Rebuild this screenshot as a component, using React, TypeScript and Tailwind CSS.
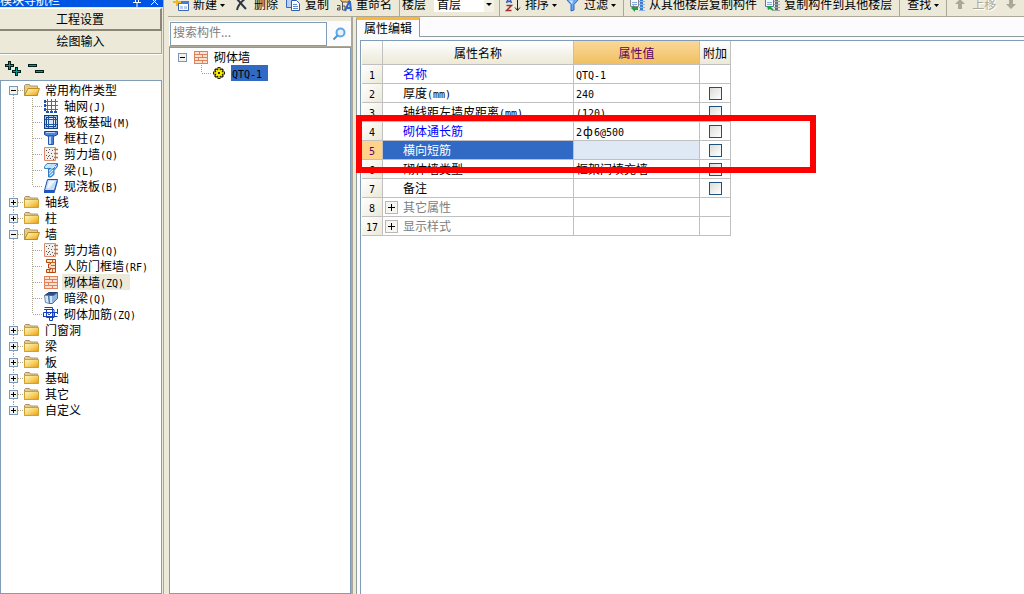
import type { ReactNode } from 'react';
import clsx from 'clsx';

type IconName =
    | 'grid'
    | 'raft'
    | 'column'
    | 'shearWall'
    | 'beam'
    | 'slab'
    | 'doorFrame'
    | 'brick'
    | 'hiddenBeam'
    | 'wallRebar';

interface TreeItem {
    label: string;
    icon: IconName;
    selected?: boolean;
}

interface TreeGroup {
    label: string;
    open?: boolean;
    items?: TreeItem[];
}

interface PropertyRow {
    no: number;
    name: string;
    value?: string;
    extra?: boolean;
    tone?: 'key' | 'muted';
    active?: boolean;
}

const groups: TreeGroup[] = [
    {
        label: '常用构件类型',
        open: true,
        items: [
            { label: '轴网(J)', icon: 'grid' },
            { label: '筏板基础(M)', icon: 'raft' },
            { label: '框柱(Z)', icon: 'column' },
            { label: '剪力墙(Q)', icon: 'shearWall' },
            { label: '梁(L)', icon: 'beam' },
            { label: '现浇板(B)', icon: 'slab' },
        ],
    },
    { label: '轴线' },
    { label: '柱' },
    {
        label: '墙',
        open: true,
        items: [
            { label: '剪力墙(Q)', icon: 'shearWall' },
            { label: '人防门框墙(RF)', icon: 'doorFrame' },
            { label: '砌体墙(ZQ)', icon: 'brick', selected: true },
            { label: '暗梁(Q)', icon: 'hiddenBeam' },
            { label: '砌体加筋(ZQ)', icon: 'wallRebar' },
        ],
    },
    { label: '门窗洞' },
    { label: '梁' },
    { label: '板' },
    { label: '基础' },
    { label: '其它' },
    { label: '自定义' },
];

const properties: PropertyRow[] = [
    { no: 1, name: '名称', value: 'QTQ-1', tone: 'key' },
    { no: 2, name: '厚度(mm)', value: '240', extra: true },
    { no: 3, name: '轴线距左墙皮距离(mm)', value: '(120)', extra: true },
    { no: 4, name: '砌体通长筋', value: '2ф6@500', extra: true, tone: 'key' },
    { no: 5, name: '横向短筋', extra: true, active: true },
    { no: 6, name: '砌体墙类型', value: '框架间填充墙', extra: true },
    { no: 7, name: '备注', extra: true },
    { no: 8, name: '其它属性', tone: 'muted' },
    { no: 17, name: '显示样式', tone: 'muted' },
];

// Latin runs are set in a narrower mono face so they take half a Han character each.
function Mixed({ text }: { text: string }) {
    return (
        <>
            {text.split(/([\x20-\x7e]+|ф)/).map((part, i) => {
                if (i % 2 === 0) return part;
                if (part === 'ф') {
                    return (
                        <span key={i} className="inline-block w-3 text-center leading-none">
                            {part}
                        </span>
                    );
                }
                return (
                    <span key={i} className="font-['DejaVu_Sans_Mono',monospace] text-[10px] leading-none">
                        {part}
                    </span>
                );
            })}
        </>
    );
}

function Svg({ w = 16, children }: { w?: number; children: ReactNode }) {
    return (
        <svg width={w} height="16" viewBox={`0 0 ${w} 16`} className="block shrink-0" fill="none" aria-hidden="true">
            {children}
        </svg>
    );
}

function ItemIcon({ name }: { name: IconName }) {
    switch (name) {
        case 'grid':
            return (
                <Svg>
                    <path d="M4.500 1v13M8.500 1v13M12.500 1v13M1 3.500h14M1 7.500h14M1 11.500h14" stroke="#3f6cc8" />
                    <path
                        d="M1 2h2v3H1zM1 6h2v3H1zM1 10h2v3H1zM3 13h3v2H3zM7 13h3v2H7zM11 13h3v2h-3z"
                        fill="#2350a8"
                    />
                </Svg>
            );
        case 'raft':
            return (
                <Svg>
                    <path d="M1 1h14v14H1z" fill="#123f86" />
                    <path d="M2.500 2.500h11v11h-11z" stroke="#a8c8ee" />
                    <path d="M4 4h8v8H4z" fill="#e8f0fb" />
                    <path d="M5.500 2v12M10.500 2v12M2 5.500h12M2 10.500h12" stroke="#1e56a8" />
                    <path d="M6 6h4v4H6z" fill="#d8e6f8" />
                </Svg>
            );
        case 'column':
            return (
                <Svg>
                    <path d="M1.500 1.500h13v3l-3 1.500h-7l-3-1.500z" fill="#4d86e0" stroke="#173f9a" />
                    <path d="M3 2.500h9" stroke="#b8d4fa" />
                    <path d="M5.500 6h5v8.500h-5z" fill="#c4dcfc" stroke="#2355b4" />
                    <path d="M8 6h2v8H8z" fill="#4a80d8" />
                </Svg>
            );
        case 'shearWall':
            return (
                <Svg>
                    <path d="M1.500 1.500h11v13h-11z" fill="#f1eeec" stroke="#e08a68" />
                    <path
                        d="M3 4h1v1H3zM6 3h1v1H6zM5 6h1v1H5zM8 7h1v1H8zM3 9h1v1H3zM6 9h1v1H6zM9 10h1v1H9zM4 12h1v1H4zM7 12h1v1H7zM10 13h1v1h-1zM5 10h1v1H5zM9 4h1v1H9z"
                        fill="#555"
                    />
                    <path d="M11 3.500h4M11 7.500h4M11 11.500h4" stroke="#d8691e" strokeWidth="1.500" />
                </Svg>
            );
        case 'beam':
            return (
                <Svg>
                    <path d="M1.500 4.500 4 1.500h10.500l-3 3v2h-10z" fill="#bfe0f8" stroke="#3a84c8" />
                    <path d="M14.500 1.500v3l-3.500 4v4l-3 2.500H5.500v-8h6" fill="#6fb0e8" stroke="#2f78be" />
                    <path d="m6 12 4-4M6 9l6-5M3 6l4-4M7 14l3-3" stroke="#e3f3fd" />
                </Svg>
            );
        case 'slab':
            return (
                <Svg>
                    <path d="M4.500 1.500h10l-3 11h-10z" fill="#c6ddfa" stroke="#1c4fb0" />
                    <path d="M1 12.500h10.500l3-11v3l-3 10.500H1z" fill="#1f58bd" />
                    <path d="M6 3h6L6 10H4z" fill="#eef6ff" />
                </Svg>
            );
        case 'doorFrame':
            return (
                <Svg>
                    <path
                        d="M3.500 1.500h9v13h-9v-3h4v-1.500h-2v-4h2V4.500h-4z"
                        fill="#fbe0c8"
                        stroke="#b3480f"
                    />
                    <path d="M8 4.500h4M8 7.500h4M8 10.500h4M6.500 12v2M9.500 11v3M9.500 2v2" stroke="#c86428" />
                </Svg>
            );
        case 'brick':
            return (
                <Svg>
                    <path d="M1 2h14v13H1z" fill="#e2805a" />
                    <path
                        d="M2 3h4v2H2zM7 3h7v2H7zM2 6h7v2H2zM10 6h4v2h-4zM2 9h3v2H2zM6 9h8v2H6zM2 12h7v2H2zM10 12h4v2h-4z"
                        fill="#fbe3d4"
                    />
                </Svg>
            );
        case 'hiddenBeam':
            return (
                <Svg>
                    <path d="M1.500 5.500 6 2.500h8.500l-4 3z" fill="#2d4f88" stroke="#1e3d78" />
                    <path d="M1.500 5.500h4l1 8-4-1z" fill="#dbe9f8" stroke="#5f88b8" />
                    <path d="M5.500 5.500h5l4-3v6l-5 5h-3z" fill="#8fb3dc" stroke="#3f6cab" />
                    <path d="M7 6h2v7H7z" fill="#d4e5f8" />
                </Svg>
            );
        case 'wallRebar':
            return (
                <Svg>
                    <path d="M1.500 1.500h8v13h-3v-4h-6v-4h14M14.500 3v5M11.500 6.500v4h3M0 10.500h12" stroke="#1740c0" />
                    <path d="M1 3.500h10v8H3.500v-8M4 6l2 3 3-3" stroke="#1740c0" />
                </Svg>
            );
    }
}

function Folder({ open }: { open?: boolean }) {
    return (
        <Svg>
            <defs>
                <linearGradient id="folderFill" x1="0" y1="0" x2="1" y2="1">
                    <stop offset="0" stopColor="#fff6c0" />
                    <stop offset="0.5" stopColor="#f8d468" />
                    <stop offset="1" stopColor="#e89a10" />
                </linearGradient>
            </defs>
            <path d="M.5 13.500v-10l1-1h4l1 1.500h7v9.500z" fill="#e4cc90" stroke="#a89868" />
            {open ? (
                <path d="M.5 13.500 4 6.500h11.500l-2.500 7z" fill="url(#folderFill)" stroke="#c08c20" />
            ) : (
                <path d="M.5 5.500h14v8H.5z" fill="url(#folderFill)" stroke="#d0a030" />
            )}
        </Svg>
    );
}

function ExpandBox({ x, open }: { x: number; open?: boolean }) {
    return (
        <g shapeRendering="crispEdges">
            <rect x={x - 4 + 0.5} y="4.5" width="8" height="8" fill="#f4f2ec" stroke="#7b98b5" />
            <path d={`M${x - 2} 8.5h5`} stroke="#000" />
            {!open && <path d={`M${x + 0.5} 6v5`} stroke="#000" />}
        </g>
    );
}

function GroupLines({ open, first, last }: { open?: boolean; first?: boolean; last?: boolean }) {
    return (
        <Svg w={23}>
            {!first && <path d="M12.500 0v4" stroke="#a8a490" strokeDasharray="1 1" />}
            {!last && <path d="M12.500 13v3" stroke="#a8a490" strokeDasharray="1 1" />}
            <path d="M17 8.500h6" stroke="#a8a490" strokeDasharray="1 1" />
            <ExpandBox x={12} open={open} />
        </Svg>
    );
}

function ItemLines({ last }: { last?: boolean }) {
    return (
        <Svg w={42}>
            <path
                d={`M12.500 0v16M31.500 0v${last ? 8 : 16}M32 8.500h10`}
                stroke="#a8a490"
                strokeDasharray="1 1"
            />
        </Svg>
    );
}

function ComponentTree() {
    return (
        <ul className="flex-1 border border-[#7f9db9] bg-white pt-px">
            {groups.map((group, g) => (
                <li key={group.label}>
                    <button type="button" className="flex h-4 items-center whitespace-nowrap">
                        <GroupLines open={group.open} first={g === 0} last={g === groups.length - 1} />
                        <Folder open={group.open} />
                        <span className="ml-[3px] px-0.5">{group.label}</span>
                    </button>
                    {group.items && (
                        <ul>
                            {group.items.map((item, i) => (
                                <li key={item.label}>
                                    <button type="button" className="flex h-4 items-center whitespace-nowrap">
                                        <ItemLines last={i === group.items!.length - 1} />
                                        <ItemIcon name={item.icon} />
                                        <span
                                            className={clsx(
                                                'ml-[3px] h-4 px-0.5 leading-4',
                                                item.selected && 'bg-[#ece9d8] pr-1.5',
                                            )}
                                        >
                                            <Mixed text={item.label} />
                                        </span>
                                    </button>
                                </li>
                            ))}
                        </ul>
                    )}
                </li>
            ))}
        </ul>
    );
}

function Sidebar() {
    return (
        <aside className="flex w-[164px] shrink-0 flex-col border-r border-[#aca899] pr-px">
            <div className="-mr-px flex h-2 items-end justify-between overflow-hidden border-b border-[#ece9d8] bg-[#0054e3] text-white">
                <h2 className="leading-[14px]">模块导航栏</h2>
                <div className="flex gap-0.5">
                    <button type="button" aria-label="固定">
                        <Svg>
                            <path d="M4 11.500h8M8 11v5M6.500 6v5M9.500 6v5" stroke="#fff" />
                        </Svg>
                    </button>
                    <button type="button" aria-label="关闭">
                        <Svg>
                            <path d="m4 7 7 7M11 7l-7 7" stroke="#fff" />
                        </Svg>
                    </button>
                </div>
            </div>
            <button
                type="button"
                className="h-[23px] border-t border-r-2 border-b-2 border-t-white border-r-[#8a8778] border-b-[#8a8778]"
            >
                工程设置
            </button>
            <button
                type="button"
                className="h-[23px] border-r border-b border-r-[#aca899] border-b-[#aca899] pb-0.5"
            >
                绘图输入
            </button>
            <div className="flex h-[26px] items-center gap-1 border-t border-white pl-1">
                <button type="button" aria-label="全部展开">
                    <Svg w={18}>
                        <path d="M1 4h3V1h3v3h3v3H7v3H4V7H1zM8 10h3V7h3v3h3v3h-3v3h-3v-3H8z" fill="#002020" />
                        <path d="M2 5.500h7M5.500 2v7M9 11.500h7M12.500 8v7" stroke="#00a090" />
                    </Svg>
                </button>
                <button type="button" aria-label="全部折叠">
                    <Svg w={18}>
                        <path d="M2 4h9v3H2zM9 10h9v3H9z" fill="#002020" />
                        <path d="M3 5.500h7M10 11.500h7" stroke="#00a090" />
                    </Svg>
                </button>
            </div>
            <ComponentTree />
        </aside>
    );
}

interface ToolButtonProps {
    icon?: ReactNode;
    label: string;
    menu?: boolean;
    disabled?: boolean;
}

function ToolButton({ icon, label, menu, disabled }: ToolButtonProps) {
    return (
        <button
            type="button"
            disabled={disabled}
            className={clsx(
                'ml-[7px] flex shrink-0 items-center gap-1 whitespace-nowrap',
                !icon && 'pl-0.5',
                disabled && 'text-[#aca899] [text-shadow:1px_1px_#fff]',
            )}
        >
            {icon}
            <span>{label}</span>
            {menu && (
                <svg width="5" height="16" viewBox="0 0 5 16" className="-ml-px" aria-hidden="true">
                    <path d="M0 8h5L2.500 11z" fill="#000" />
                </svg>
            )}
        </button>
    );
}

function Separator() {
    return <span className="-mr-0.5 ml-[7px] h-6 w-px shrink-0 bg-[#aca899]" />;
}

function CopyFloorIcon({ flip }: { flip?: boolean }) {
    return (
        <Svg>
            <path d="M1.500 1.500h8v9h-8z" fill="#f4f8ff" stroke={flip ? '#4b78c0' : '#808890'} />
            <path d="M3 6.500h5M3 8.500h5" stroke="#8aa8d8" />
            <path d="M12.500 0v15" stroke={flip ? '#607080' : '#3d7cd0'} strokeWidth="3" />
            <path d="M10 2.500h6M10 5.500h6M10 8.500h6M10 11.500h6M10 14.500h6" stroke={flip ? '#9aa4b0' : '#88b4ee'} />
            <path d={flip ? 'M3 10h5l-1 1 3 3-1 1-3-2-2 1z' : 'M2 12l3-3v2h4v3H6v2z'} fill="#22a040" />
        </Svg>
    );
}

function Toolbar() {
    return (
        <div className="flex h-[17px] items-end overflow-hidden border-b border-[#aca899] bg-[#ece9d8]">
            <div className="flex h-6 items-center">
                <div className="-ml-0.5 flex">
                    <ToolButton
                        label="新建"
                        menu
                        icon={
                            <Svg>
                                <path d="M5.500 5.500h10v9h-10z" fill="#fff" stroke="#3c64b4" />
                                <path d="M5 5h11v3H5z" fill="#4a7ad0" />
                                <path d="M7 10h3v3H7zM11 10h3v3h-3z" fill="#b8cdf0" />
                                <path d="M4 0v10M0 6h8" stroke="#f0b818" strokeWidth="2" />
                            </Svg>
                        }
                    />
                </div>
                <div className="ml-0.5 flex">
                    <ToolButton
                        label="删除"
                        icon={
                            <Svg>
                                <path d="M2 2c3 3 7 8 10 11M12 2C8 5 4 9 3 14" stroke="#303848" strokeWidth="2" />
                            </Svg>
                        }
                    />
                </div>
                <ToolButton
                    label="复制"
                    icon={
                        <Svg>
                            <path d="M1.500 1.500h6l3 3v7h-9z" fill="#b8d0f4" stroke="#3a68b8" />
                            <path d="M6.500 4.500h5l3 3v7h-8z" fill="#fff" stroke="#2f5cb0" />
                            <path d="M8 8.500h4M8 10.500h5M8 12.500h5" stroke="#5c88d0" />
                        </Svg>
                    }
                />
                <ToolButton
                    label="重命名"
                    icon={
                        <Svg>
                            <path d="M3 2h9l2 4H6z" fill="#f0c880" stroke="#6b5020" />
                            <path d="M1 9.500h3v4.500H1.500V12H4M6.500 6v8H9v-4H6.500" stroke="#505050" />
                            <path d="m9 15 4-9h1l1 9M10.500 12h4" stroke="#2f68c8" strokeWidth="2" />
                        </Svg>
                    }
                />
                <Separator />
                <label htmlFor="floor" className="ml-1 shrink-0 whitespace-nowrap">
                    楼层
                </label>
                <div className="relative -mr-0.5 ml-2 shrink-0">
                    <select
                        id="floor"
                        className="block h-4 w-[60px] appearance-none bg-white pl-[3px] leading-4 outline-none"
                    >
                        <option>首层</option>
                    </select>
                    <svg
                        className="pointer-events-none absolute top-0 right-0 bg-[#f4f2e8]"
                        width="10"
                        height="16"
                        aria-hidden="true"
                    >
                        <path d="M2 7h6l-3 3z" fill="#000" />
                    </svg>
                </div>
                <Separator />
                <ToolButton
                    label="排序"
                    menu
                    icon={
                        <Svg>
                            <path d="m1.500 7 2.500-6 2.500 6M2 5.500h4" stroke="#2c60c0" strokeWidth="1.500" />
                            <path d="M1.500 9.500h5l-5 5h5" stroke="#a03030" strokeWidth="1.500" />
                            <path d="M12.500 0v14M10 11.500l2.500 3 2.500-3" stroke="#202020" />
                        </Svg>
                    }
                />
                <ToolButton
                    label="过滤"
                    menu
                    icon={
                        <Svg>
                            <path d="M2.500 3.500h12l-4.500 5V14l-3 1V8.500z" fill="#6ca8f4" stroke="#2c64c8" />
                            <path d="M5 4.500h4L8 8z" fill="#d4e8ff" />
                        </Svg>
                    }
                />
                <Separator />
                <ToolButton label="从其他楼层复制构件" icon={<CopyFloorIcon />} />
                <ToolButton label="复制构件到其他楼层" icon={<CopyFloorIcon flip />} />
                <Separator />
                <ToolButton label="查找" menu />
                <Separator />
                <ToolButton
                    label="上移"
                    disabled
                    icon={
                        <Svg>
                            <path d="M8 3l5 5h-3v5H6V8H3z" fill="#aca899" />
                        </Svg>
                    }
                />
                <ToolButton
                    label="下移"
                    disabled
                    icon={
                        <Svg>
                            <path d="M8 13l5-5h-3V3H6v5H3z" fill="#aca899" />
                        </Svg>
                    }
                />
            </div>
        </div>
    );
}

function ComponentList() {
    return (
        <section className="flex w-[188px] shrink-0 flex-col border-r-[3px] border-[#ece9d8] pl-px">
            <div className="flex flex-1 flex-col border-r-2 border-[#aca899] bg-[#ece9d8] pt-1">
                <div className="flex h-[26px] items-stretch border-b border-[#aca899] bg-[#fcfcfe] pt-px pl-px">
                    <input
                        type="text"
                        aria-label="搜索构件"
                        placeholder="搜索构件..."
                        className="w-[157px] border border-[#7f9db9] bg-white px-0.5 pb-1 outline-none placeholder:text-[#808080]"
                    />
                    <button type="button" aria-label="搜索" className="flex flex-1 items-center justify-center">
                        <Svg>
                            <circle cx="9.5" cy="6.5" r="4" fill="#e4f2fe" stroke="#5ca8e4" strokeWidth="2" />
                            <path d="m6.500 9.500-4 4" stroke="#4a94d8" strokeWidth="2" />
                        </Svg>
                    </button>
                </div>
                <ul className="flex-1 border border-[#7f9db9] bg-white pt-px">
                    <li className="flex h-4 items-center">
                        <Svg w={23}>
                            <ExpandBox x={12} open />
                        </Svg>
                        <ItemIcon name="brick" />
                        <span className="ml-[5px]">砌体墙</span>
                    </li>
                    <li className="flex h-4 items-center">
                        <Svg w={42}>
                            <path d="M31.500 0v8M32 8.500h10" stroke="#a8a490" strokeDasharray="1 1" />
                        </Svg>
                        <Svg>
                            <path
                                d="M7 2v12M1 8h12M3 4l8 8M11 4l-8 8"
                                stroke="#202000"
                                strokeWidth="3"
                            />
                            <circle cx="7" cy="8" r="4.5" fill="#202000" />
                            <path d="M7 3v10M2 8h10M4 5l6 6M10 5l-6 6" stroke="#ffee00" strokeWidth="1.500" />
                            <circle cx="7" cy="8" r="3" fill="#ffee00" />
                            <path d="M6 7h2v2H6z" fill="#303000" />
                        </Svg>
                        <span className="ml-[3px] h-4 bg-[#316ac5] pr-1.5 pl-px leading-4 text-black">
                            <Mixed text="QTQ-1" />
                        </span>
                    </li>
                </ul>
            </div>
        </section>
    );
}

const headCell =
    'border-r border-b border-[#c0c0c0] bg-linear-to-b from-white to-[#ece9d8] p-0 text-center font-normal whitespace-nowrap';
const bodyCell = 'h-[19px] border-r border-b border-[#c0c0c0] p-0 leading-4 whitespace-nowrap';

function PropertyTable() {
    return (
        <table className="w-[369px] table-fixed border-separate border-spacing-0">
            <colgroup>
                <col className="w-[21px]" />
                <col className="w-[191px]" />
                <col className="w-[126px]" />
                <col className="w-[31px]" />
            </colgroup>
            <thead>
                <tr className="h-6">
                    <th className={headCell} aria-label="序号" />
                    <th className={headCell}>属性名称</th>
                    <th className="border-r border-b border-[#c0c0c0] bg-linear-to-b from-[#fbd898] to-[#f0c060] p-0 text-center font-normal text-[#600060]">
                        属性值
                    </th>
                    <th className={headCell}>附加</th>
                </tr>
            </thead>
            <tbody>
                {properties.map((row) => (
                    <tr key={row.no}>
                        <td
                            className={clsx(
                                bodyCell,
                                'text-center',
                                row.active
                                    ? 'bg-[#ffd38a] text-[#600060]'
                                    : 'bg-linear-to-br from-white to-[#ece9d8]',
                            )}
                        >
                            <Mixed text={String(row.no)} />
                        </td>
                        <td className={clsx(bodyCell, row.active && 'bg-[#316ac5] text-white')}>
                            <div className="flex h-4 items-center">
                                <span className="flex w-5 shrink-0 pl-0.5">
                                    {row.tone === 'muted' && (
                                        <button
                                            type="button"
                                            aria-label={`展开${row.name}`}
                                            className="flex h-[13px] w-[13px] items-center justify-center border border-[#b8b8b8] bg-[#f6f5f0]"
                                        >
                                            <svg width="7" height="7" aria-hidden="true">
                                                <path d="M0 3.500h7M3.500 0v7" stroke="#000" />
                                            </svg>
                                        </button>
                                    )}
                                </span>
                                <span
                                    className={clsx(
                                        row.tone === 'key' && 'text-[#0000ff]',
                                        row.tone === 'muted' && 'text-[#808080]',
                                    )}
                                >
                                    <Mixed text={row.name} />
                                </span>
                            </div>
                        </td>
                        <td className={clsx(bodyCell, 'pl-0.5', row.active && 'bg-[#dfe9f5]')}>
                            {row.value && <Mixed text={row.value} />}
                        </td>
                        <td className={bodyCell}>
                            {row.extra && (
                                <input
                                    type="checkbox"
                                    aria-label={`附加 ${row.name}`}
                                    className="mx-auto block h-[13px] w-[13px] appearance-none border border-[#1c5180] bg-linear-to-br from-[#dcdcd7] to-white"
                                />
                            )}
                        </td>
                    </tr>
                ))}
            </tbody>
        </table>
    );
}

function PropertyEditor() {
    return (
        <section className="relative flex min-w-0 flex-1 flex-col bg-[#fcfcfe]">
            <div className="flex h-5" role="tablist">
                <button
                    type="button"
                    role="tab"
                    aria-selected="true"
                    className="w-16 border-t-[3px] border-r border-l border-t-[#ffb732] border-r-[#919b9c] border-l-[#919b9c] pb-1 whitespace-nowrap"
                >
                    属性编辑
                </button>
                <div className="flex-1 border-b border-[#919b9c]" />
            </div>
            <div className="flex flex-1 border-l border-[#919b9c] pt-[3px] pl-[3px]">
                <div className="flex-1 border-t border-l border-[#7f9db9] bg-white pl-px">
                    <PropertyTable />
                </div>
            </div>
            {/* marker over rows 4 and 5 */}
            <div className="pointer-events-none absolute top-[98px] left-0 h-[58px] w-[460px] border-[6px] border-[#ff0000]" />
        </section>
    );
}

export default function App() {
    return (
        <div className="flex min-h-screen overflow-hidden bg-[#ece9d8] font-['Noto_Sans_CJK_SC',sans-serif] text-[12px] leading-4 text-black">
            <Sidebar />
            <main className="ml-1 flex min-w-0 flex-1 flex-col">
                <Toolbar />
                <div className="flex flex-1">
                    <ComponentList />
                    <PropertyEditor />
                </div>
            </main>
        </div>
    );
}
